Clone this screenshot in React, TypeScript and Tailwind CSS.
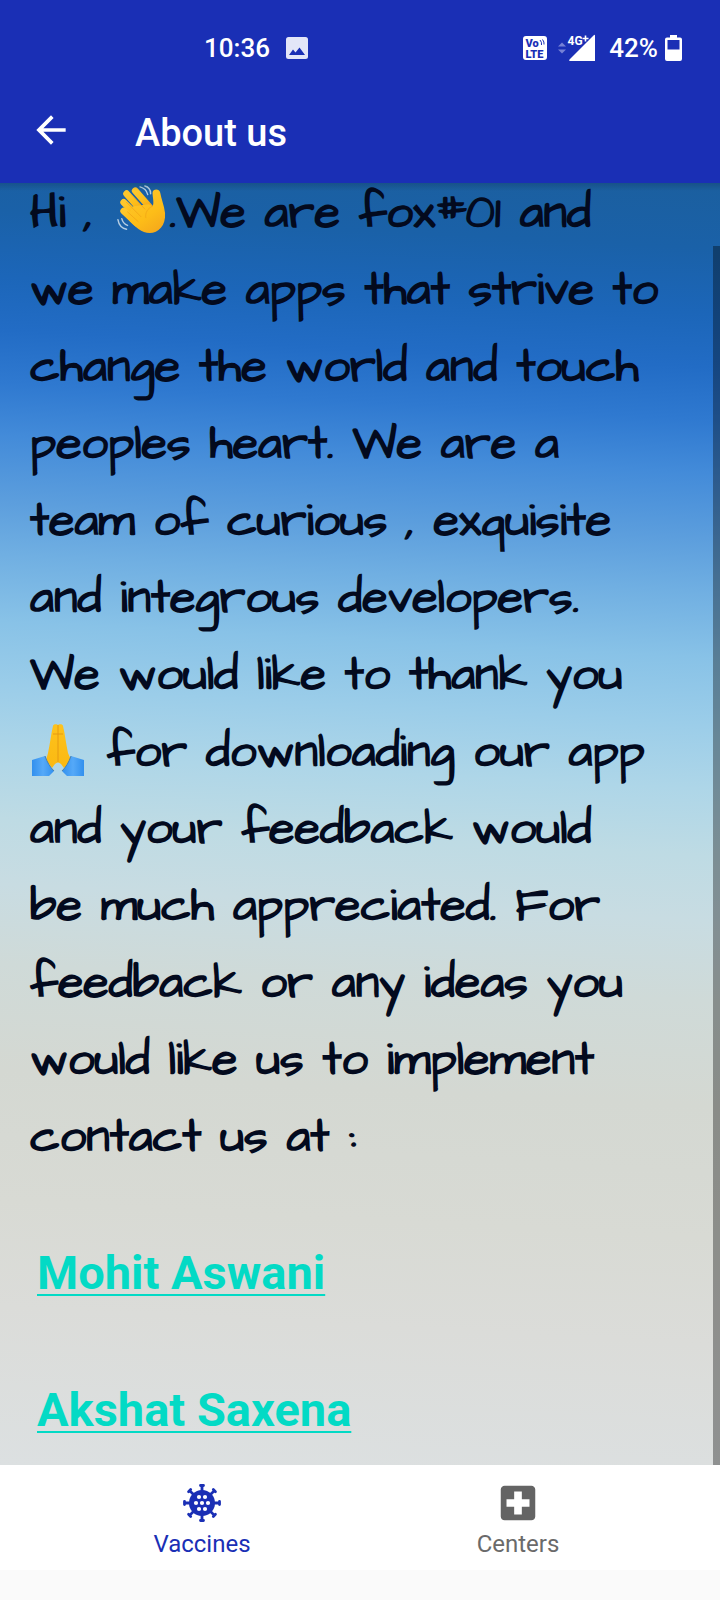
import type { ReactNode } from "react";
import { MdArrowBack, MdLocalHospital } from "react-icons/md";

function WavingHand() {
  return (
    <svg
      viewBox="0 0 52 52"
      className="mx-1 inline-block size-[50px] align-[-8px]"
      role="img"
      aria-label="Waving hand"
    >
      <defs>
        <linearGradient id="palm" x1="0.2" y1="0" x2="0.8" y2="1">
          <stop offset="0" stopColor="#fec72c" />
          <stop offset="0.6" stopColor="#fdbd18" />
          <stop offset="1" stopColor="#f5a81c" />
        </linearGradient>
      </defs>
      <g fill="none" stroke="#cfe0ee" strokeWidth="1.5" strokeLinecap="round" opacity="0.85">
        <path d="M2 36c1 6 4 9 9 10" />
        <path d="M6 35c1 4 3 6 6 7" />
        <path d="M25 2c4 1 7 4 8 8" />
        <path d="M30 1c4 1 6 4 6 8" />
      </g>
      <g stroke="url(#palm)" strokeWidth="7" strokeLinecap="round" fill="none">
        <path d="M11 9l15 17" />
        <path d="M20 6l15 17" />
        <path d="M8 18l15 15" />
        <path d="M8 27l14 13" />
      </g>
      <path
        d="M18 22L34 20L38 22C40 19 38 13 38 8C38 4 45 3 46 8C47 14 50 21 51 29C52 42 44 50 35 50C27 50 20 44 11 34Z"
        fill="url(#palm)"
      />
      <path
        d="M16 10l14 15M11 18l15 15M12 28l11 10M38 22c-5 2-8 7-7 12"
        fill="none"
        stroke="#f0a516"
        strokeWidth="0.8"
        strokeLinecap="round"
      />
    </svg>
  );
}

function FoldedHands() {
  return (
    <svg
      viewBox="0 0 52 52"
      className="mr-1 ml-0.5 inline-block size-[52px] align-[-10px]"
      role="img"
      aria-label="Folded hands"
    >
      <defs>
        <linearGradient id="hands" x1="0" y1="0" x2="0" y2="1">
          <stop offset="0" stopColor="#fdc21c" />
          <stop offset="1" stopColor="#fbb912" />
        </linearGradient>
        <linearGradient id="sleeve" x1="0" y1="0" x2="1" y2="0">
          <stop offset="0" stopColor="#3290ee" />
          <stop offset="0.5" stopColor="#55a9f8" />
          <stop offset="1" stopColor="#3290ee" />
        </linearGradient>
      </defs>
      <path
        d="M21 2C21 0 25 0 26 1C27 0 31 0 31 2C33 10 34 20 36 29L39 36L32 44L29 40Q26 37 23 40L20 44L14 36L16 29C18 20 19 10 21 2Z"
        fill="url(#hands)"
      />
      <path d="M26 1V38M21 10h10" fill="none" stroke="#e59a12" strokeWidth="1" />
      <path d="M0 36L13 32C15 38 18 43 22 47L17 52H0Z" fill="url(#sleeve)" />
      <path d="M52 36L39 32C37 38 34 43 30 47L35 52H52Z" fill="url(#sleeve)" />
      <path d="M13 32C15 38 18 43 22 47M39 32C37 38 34 43 30 47" fill="none" stroke="#4b7fa8" strokeWidth="1" />
    </svg>
  );
}

function VirusIcon() {
  const angles = [0, 45, 90, 135, 180, 225, 270, 315];
  const holes = [
    [-6, 0],
    [0, 0],
    [6, 0],
    [-3, -6],
    [3, -6],
    [-3, 6],
    [3, 6],
  ];
  return (
    <svg viewBox="-20 -20 40 40" className="size-10" aria-hidden="true">
      <circle r="13" fill="#1a2fb5" />
      {angles.map((a) => (
        <path
          key={a}
          d="M0 -11V-17.500M-1.500 -17.500H1.500"
          transform={`rotate(${a})`}
          stroke="#1a2fb5"
          strokeWidth="2.800"
          strokeLinecap="round"
        />
      ))}
      {holes.map(([x, y]) => (
        <circle key={`${x},${y}`} cx={x} cy={y} r="2.100" fill="#fff" />
      ))}
    </svg>
  );
}

function StatusBar() {
  return (
    <div className="flex h-[76px] items-center pt-5 pr-[38px] pl-[204px] text-[26px] leading-8 font-medium">
      <span>10:36</span>
      <svg viewBox="0 0 22 22" className="ml-4 size-[22px]" aria-hidden="true">
        <rect width="22" height="22" rx="2.500" fill="#e3e6f8" />
        <path d="M3 18L7 12.500L9.500 15.500L13.500 10.500L19 18Z" fill="#1a2fb5" />
      </svg>
      <div className="ml-auto flex items-center">
        <svg viewBox="0 0 24 24" className="size-6" role="img" aria-label="VoLTE">
          <rect width="24" height="24" rx="3" fill="#fff" />
          <g fill="#1a2fb5" className="font-[Roboto,sans-serif] font-black">
            <text x="2.500" y="11" fontSize="11">Vo</text>
            <text x="2.500" y="21.500" fontSize="11">LTE</text>
          </g>
          <path d="M17 4q2 2 1.500 5M19.500 3.500q2 2.500 1.500 5" fill="none" stroke="#1a2fb5" strokeWidth="1" />
        </svg>
        <svg viewBox="0 0 38 28" className="ml-[10px] h-7 w-[38px]" role="img" aria-label="4G+ signal">
          <path d="M1 12.500L5 8.500L9 12.500ZM1 15.500H9L5 19.500Z" fill="#7681d6" />
          <path d="M38 1V27H13Q11.500 27 12.500 25.500L36.500 1.500Q38 0 38 2Z" fill="#fff" />
          <g
            fontSize="12"
            fill="#fff"
            stroke="#1a2fb5"
            strokeWidth="1.500"
            paintOrder="stroke"
            className="font-[Roboto,sans-serif] font-bold"
          >
            <text x="10.500" y="11">4G</text>
          </g>
          <path d="M25.500 4.500H31.500M28.500 1.500V7.500" stroke="#1a2fb5" strokeWidth="3.500" />
          <path d="M25.500 4.500H31.500M28.500 1.500V7.500" stroke="#fff" strokeWidth="1.600" />
        </svg>
        <span className="ml-[14px]">42%</span>
        <svg viewBox="0 0 17 26" className="ml-[7px] h-[26px] w-[17px]" aria-hidden="true">
          <path
            fillRule="evenodd"
            d="M5 0H12V2.500H15Q17 2.500 17 4.500V24Q17 26 15 26H2Q0 26 0 24V4.500Q0 2.500 2 2.500H5ZM2.500 5V14.500H14.500V5Z"
            fill="#fff"
          />
        </svg>
      </div>
    </div>
  );
}

function Line({ children }: { children: ReactNode }) {
  return <span className="block whitespace-nowrap">{children}</span>;
}

export default function App() {
  return (
    <div className="flex min-h-screen flex-col bg-[#fafafa] font-[Roboto,sans-serif]">
      <header className="bg-[#1a2fb5] text-white">
        <StatusBar />
        <div className="flex h-[107px] items-center pl-[29px]">
          <button type="button" aria-label="Back" className="size-[44px]">
            <MdArrowBack className="size-[44px]" />
          </button>
          <h1 className="ml-[62px] pt-1.5 text-[38px] leading-10 font-medium">About us</h1>
        </div>
      </header>

      <main className="relative flex-1 bg-[linear-gradient(183deg,#1b5f9f_0%,#1a61a8_5%,#1c66b9_10%,#226cc5_14%,#2f79d0_18%,#438bd9_22%,#5c9edd_27%,#70afe2_31%,#88c2e7_36%,#9bcde9_41%,#aed6e8_46%,#bedbe4_51%,#c8dce2_56%,#cfdad8_62%,#d4d8d2_70%,#d8dad4_80%,#dbdcd9_88%,#dce0e1_100%)]">
        <div className="absolute inset-x-0 top-0 h-2 bg-linear-to-b from-black/15 to-transparent" />
        <div className="absolute top-[63px] right-0 bottom-0 w-[7px] bg-black/35" />
        <p className="-mt-2 pl-[30px] font-['Architects_Daughter',Inter,sans-serif] text-[47px] leading-[77px] font-bold text-[#030a1e]">
          <Line>
            Hi , <WavingHand />
            .We are fox#01 and
          </Line>
          <Line>we make apps that strive to</Line>
          <Line>change the world and touch</Line>
          <Line>peoples heart. We are a</Line>
          <Line>team of curious , exquisite</Line>
          <Line>and integrous developers.</Line>
          <Line>We would like to thank you</Line>
          <Line>
            <FoldedHands /> for downloading our app
          </Line>
          <Line>and your feedback would</Line>
          <Line>be much appreciated. For</Line>
          <Line>feedback or any ideas you</Line>
          <Line>would like us to implement</Line>
          <Line>contact us at :</Line>
        </p>
        <div className="mt-[69px] flex flex-col items-start gap-[81px] pl-[37px] text-[47px] leading-[56px] font-bold text-[#03dac5]">
          <a href="#mohit" className="underline decoration-[2px] underline-offset-[5px]">Mohit Aswani</a>
          <a href="#akshat" className="underline decoration-[2px] underline-offset-[5px]">Akshat Saxena</a>
        </div>
      </main>

      <nav className="mb-[30px] bg-white">
        <div className="mx-auto flex h-[105px] max-w-[632px] text-[24px] leading-7">
          <a href="#vaccines" className="flex flex-1 flex-col items-center pt-[18px] text-[#1a2fb5]">
            <VirusIcon />
            <span className="mt-[7px]">Vaccines</span>
          </a>
          <a href="#centers" className="flex flex-1 flex-col items-center pt-[18px] text-[#6a6a6a]">
            <span className="flex h-10 items-center">
              <MdLocalHospital className="size-[46px] text-[#646464]" />
            </span>
            <span className="mt-[7px]">Centers</span>
          </a>
        </div>
      </nav>
    </div>
  );
}
